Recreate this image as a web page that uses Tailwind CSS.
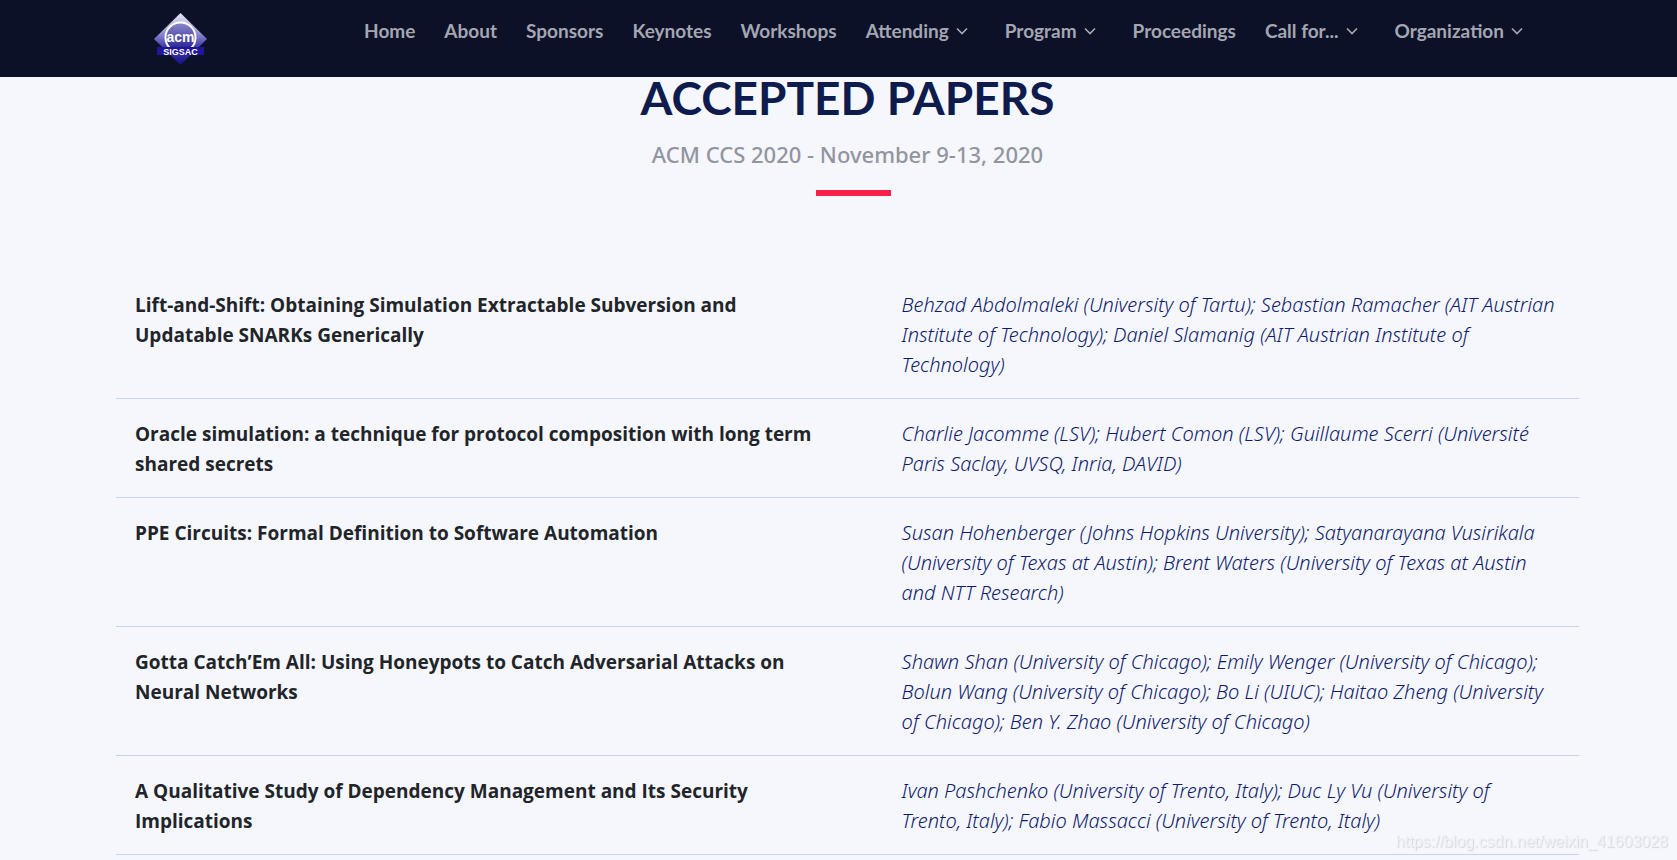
<!DOCTYPE html>
<html lang="en">
<head>
<meta charset="utf-8">
<title>Accepted Papers</title>
<script src="https://cdn.jsdelivr.net/npm/@tailwindcss/browser@4"></script>
</head>
<body class="h-screen overflow-hidden bg-[#f6f7fd] font-['Open_Sans',sans-serif] text-[#212529]">
<svg class="hidden"><symbol id="chevron" viewBox="0 0 12 12"><path d="M1 3.500 6 8.500l5-5" fill="none" stroke="currentColor" stroke-width="1.700"/></symbol></svg>
<header class="flex h-[77px] items-start justify-between bg-[#0c1127] pr-[154px] pl-[153px]">
  <a href="#" aria-label="ACM SIGSAC" class="mt-3">
    <svg class="h-[54px] w-[54px]" viewBox="0 0 54 54">
      <defs><linearGradient id="d" x1="0" y1="0" x2="0" y2="1"><stop offset="0" stop-color="#e6e6f4"/><stop offset=".3" stop-color="#aaaadb"/><stop offset=".62" stop-color="#4a43ae"/><stop offset="1" stop-color="#16108a"/></linearGradient>
      <linearGradient id="c" x1="0" y1="0" x2="0" y2="1"><stop offset="0" stop-color="#8d8ac8"/><stop offset="1" stop-color="#1c138f"/></linearGradient></defs>
      <path d="M27.500 1 54 27 27.500 53 1 27Z" fill="url(#d)"/>
      <circle cx="27.500" cy="25.500" r="15" fill="url(#c)" stroke="#fff" stroke-width="2"/>
      <text x="27.500" y="30" text-anchor="middle" font-family="Liberation Sans" font-weight="700" font-size="14" fill="#fff">acm</text>
      <path d="M4 35h47v8H4z" fill="#21169b"/>
      <text x="27.500" y="42.500" text-anchor="middle" font-family="Liberation Sans" font-weight="700" font-size="9" fill="#fff">SIGSAC</text>
    </svg>
  </a>
  <nav class="mt-[19px] flex gap-[29px] font-['Lato',sans-serif] text-[19px] leading-6 font-bold whitespace-nowrap text-[#a4a6b2]">
    <a href="#">Home</a>
    <a href="#">About</a>
    <a href="#">Sponsors</a>
    <a href="#">Keynotes</a>
    <a href="#">Workshops</a>
    <a href="#" class="mr-2 flex items-center gap-[7px]">Attending<svg class="h-3 w-3"><use href="#chevron"/></svg></a>
    <a href="#" class="mr-2 flex items-center gap-[7px]">Program<svg class="h-3 w-3"><use href="#chevron"/></svg></a>
    <a href="#">Proceedings</a>
    <a href="#" class="mr-2 flex items-center gap-[7px]">Call for...<svg class="h-3 w-3"><use href="#chevron"/></svg></a>
    <a href="#" class="flex items-center gap-[7px]">Organization<svg class="h-3 w-3"><use href="#chevron"/></svg></a>
  </nav>
</header>
<main class="pr-[98px] pl-[116px]">
  <div class="flex flex-col items-center">
    <h1 class="font-['Lato',sans-serif] text-[46px] leading-[42px] font-bold text-[#0e1b4d]">ACCEPTED PAPERS</h1>
    <p class="mt-[19px] font-['Noto_Sans',sans-serif] text-[22px] leading-8 font-medium text-[#9295a0]">ACM CCS 2020 - November 9-13, 2020</p>
    <div class="mt-5 ml-3 h-[6px] w-[75px] bg-[#f82249]"></div>
  </div>
  <table class="mt-[74px] w-full table-fixed border-collapse text-left align-top leading-[30px]">
    <colgroup><col class="w-[52.4%]"><col></colgroup>
    <tbody class="align-top">
      <tr class="border-b border-[#c5d3f6]"><th class="px-[19px] pt-5 pb-[18px] text-[19px] font-bold">Lift-and-Shift: Obtaining Simulation Extractable Subversion and<br>Updatable SNARKs Generically</th>
      <td class="px-[19px] pt-5 pb-[18px] font-['Noto_Sans',sans-serif] text-[20px] font-light whitespace-nowrap text-[#0e1b6a] italic">Behzad Abdolmaleki (University of Tartu); Sebastian Ramacher (AIT Austrian<br>Institute of Technology); Daniel Slamanig (AIT Austrian Institute of<br>Technology)</td></tr>
      <tr class="border-b border-[#c5d3f6]"><th class="px-[19px] pt-5 pb-[18px] text-[19px] font-bold">Oracle simulation: a technique for protocol composition with long term<br>shared secrets</th>
      <td class="px-[19px] pt-5 pb-[18px] font-['Noto_Sans',sans-serif] text-[20px] font-light whitespace-nowrap text-[#0e1b6a] italic">Charlie Jacomme (LSV); Hubert Comon (LSV); Guillaume Scerri (Université<br>Paris Saclay, UVSQ, Inria, DAVID)</td></tr>
      <tr class="border-b border-[#c5d3f6]"><th class="px-[19px] pt-5 pb-[18px] text-[19px] font-bold">PPE Circuits: Formal Definition to Software Automation</th>
      <td class="px-[19px] pt-5 pb-[18px] font-['Noto_Sans',sans-serif] text-[20px] font-light whitespace-nowrap text-[#0e1b6a] italic">Susan Hohenberger (Johns Hopkins University); Satyanarayana Vusirikala<br>(University of Texas at Austin); Brent Waters (University of Texas at Austin<br>and NTT Research)</td></tr>
      <tr class="border-b border-[#c5d3f6]"><th class="px-[19px] pt-5 pb-[18px] text-[19px] font-bold">Gotta Catch’Em All: Using Honeypots to Catch Adversarial Attacks on<br>Neural Networks</th>
      <td class="px-[19px] pt-5 pb-[18px] font-['Noto_Sans',sans-serif] text-[20px] font-light whitespace-nowrap text-[#0e1b6a] italic">Shawn Shan (University of Chicago); Emily Wenger (University of Chicago);<br>Bolun Wang (University of Chicago); Bo Li (UIUC); Haitao Zheng (University<br>of Chicago); Ben Y. Zhao (University of Chicago)</td></tr>
      <tr class="border-b border-[#c5d3f6]"><th class="px-[19px] pt-5 pb-[18px] text-[19px] font-bold">A Qualitative Study of Dependency Management and Its Security<br>Implications</th>
      <td class="px-[19px] pt-5 pb-[18px] font-['Noto_Sans',sans-serif] text-[20px] font-light whitespace-nowrap text-[#0e1b6a] italic">Ivan Pashchenko (University of Trento, Italy); Duc Ly Vu (University of<br>Trento, Italy); Fabio Massacci (University of Trento, Italy)</td></tr>
    </tbody>
  </table>
</main>
<div class="fixed right-[9px] bottom-[6px] font-['Liberation_Sans',sans-serif] text-[16px] leading-6 text-[#f1f1f5] [text-shadow:1px_1px_1px_#d4d5db]">https://blog.csdn.net/weixin_41603028</div>
</body>
</html>
